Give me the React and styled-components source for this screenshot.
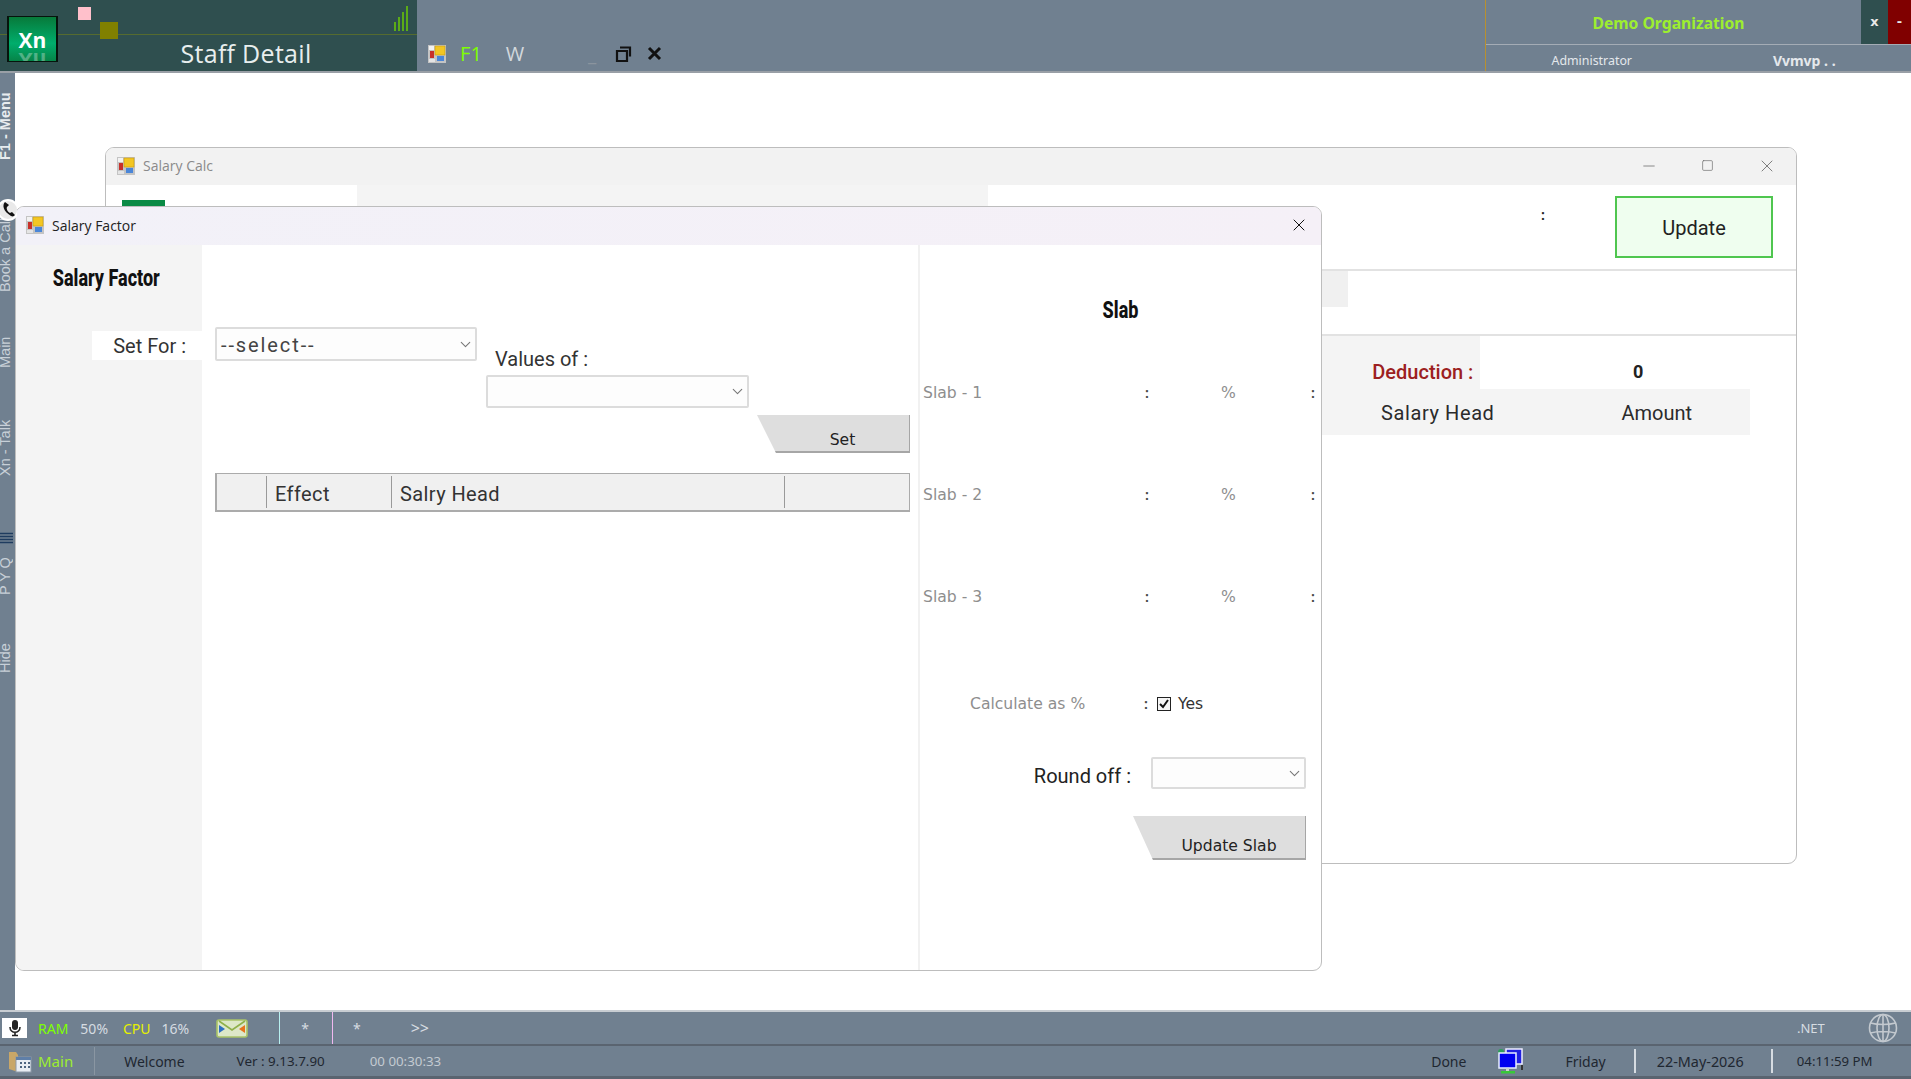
import React from "react";
import styled, { createGlobalStyle } from "styled-components";
import { ChevronDown, X, Minus, Square } from "lucide-react";

const Global = createGlobalStyle`
  html, body { margin: 0; padding: 0; height: 100%; overflow: hidden; background: #fff; }
  #root { height: 100%; }
  * { box-sizing: border-box; }
`;

const Page = styled.div`
  width: 1911px;
  height: 1079px;
  display: flex;
  flex-direction: column;
  overflow: hidden;
  font-family: "Roboto", sans-serif;
  background: #708090;
`;

/* top bar */
const TopBar = styled.div`
  height: 73px;
  flex: none;
  display: flex;
  background: #708090;
  border-bottom: 2px solid #999fa6;
`;
const Brand = styled.div`
  position: relative;
  width: 417px;
  display: flex;
  flex-direction: column;
  background: #2f4f4f;
`;
const BrandTop = styled.div`
  height: 35px;
  border-bottom: 1px solid #556b2f;
`;
const BrandTitle = styled.div`
  flex: 1;
  display: flex;
  align-items: center;
  justify-content: center;
  padding-left: 75px;
  color: #e8eeee;
  font: 400 25px "Open Sans", sans-serif;
  letter-spacing: 0.3px;
`;
const Logo = styled.div`
  position: absolute;
  left: 7px;
  top: 16px;
  width: 51px;
  height: 46px;
  overflow: hidden;
  border: 1px solid #06140c;
  border-width: 1px 2px;
  background: linear-gradient(180deg, #077a3a 0%, #00ad6c 60%, #068448 100%);
  color: #fff;
  font: 700 21px "Open Sans", sans-serif;
  text-align: center;
  line-height: 46px;
`;
const LogoEcho = styled.div`
  position: absolute;
  left: 0;
  right: 0;
  top: 21px;
  transform: scaleY(-1);
  opacity: 0.3;
`;
const Marker = styled.div`
  position: absolute;
  left: ${(p) => p.$x}px;
  top: ${(p) => p.$y}px;
  width: ${(p) => p.$w}px;
  height: ${(p) => p.$h}px;
  background: ${(p) => p.$c};
`;
const Signal = styled.svg`
  position: absolute;
  left: 393px;
  top: 5px;
`;
const TopTools = styled.div`
  flex: 1;
  display: flex;
  align-items: center;
  padding: 36px 0 0 11px;
`;
const ToolText = styled.span`
  width: ${(p) => p.$w}px;
  margin-left: ${(p) => p.$ml || 0}px;
  color: ${(p) => p.$c};
  font: ${(p) => p.$weight || 400} 20px "Open Sans", sans-serif;
  text-align: center;
`;
const RestoreIcon = styled.svg`
  margin-left: 16px;
`;
const CloseIcon = styled.svg`
  margin-left: 15px;
`;
const OrgBlock = styled.div`
  width: 426px;
  display: flex;
  flex-direction: column;
  border-left: 1px solid #b8902f;
`;
const OrgTop = styled.div`
  height: 45px;
  display: flex;
  border-bottom: 1px solid #a4acb5;
`;
const OrgName = styled.div`
  flex: 1;
  text-align: center;
  padding: 12px 10px 0 0;
  color: #9dee2f;
  font: 700 15.7px "Noto Sans", sans-serif;
`;
const OrgButton = styled.div`
  width: ${(p) => p.$w}px;
  background: ${(p) => p.$c};
  color: #e8e8e8;
  text-align: center;
  font: 700 13px "DejaVu Sans", sans-serif;
  padding-top: 14px;
`;
const OrgBottom = styled.div`
  flex: 1;
  display: flex;
  align-items: center;
  padding-top: 4px;
  color: #e4e8ec;
  font: 400 12.4px "Noto Sans", sans-serif;
`;
const OrgCell = styled.div`
  width: ${(p) => p.$w}px;
  text-align: center;
  font-weight: ${(p) => (p.$bold ? 700 : 400)};
  font-size: ${(p) => (p.$bold ? "14px" : "inherit")};
`;

/* middle */
const Middle = styled.div`
  flex: 1;
  display: flex;
  min-height: 0;
`;
const Side = styled.div`
  position: relative;
  z-index: 3;
  width: 15px;
  flex: none;
  display: flex;
  flex-direction: column;
  background: #708090;
  padding-top: 19px;
`;
const SideTab = styled.div`
  height: ${(p) => p.$h}px;
  margin-top: ${(p) => p.$mt}px;
  width: 9px;
  display: flex;
  align-items: center;
  justify-content: center;
  white-space: nowrap;
  writing-mode: vertical-rl;
  transform: rotate(180deg);
  color: ${(p) => (p.$strong ? "#e8ecef" : "#c8d0d8")};
  font: ${(p) => (p.$strong ? 700 : 400)} 14.5px "Liberation Sans", sans-serif;
`;
const PhoneBadge = styled.svg`
  position: absolute;
  left: -1px;
  top: 124px;
`;
const PyqBars = styled.svg`
  position: absolute;
  left: 0;
  top: 459px;
`;
const Desktop = styled.div`
  position: relative;
  flex: 1;
  background: #fff;
`;
const Win = styled.div`
  position: absolute;
  left: ${(p) => p.$x}px;
  top: ${(p) => p.$y}px;
  width: ${(p) => p.$w}px;
  height: ${(p) => p.$h}px;
  display: flex;
  flex-direction: column;
  background: #fff;
  border: 1px solid #bdbdbd;
  border-radius: 9px;
  overflow: hidden;
`;
const TitleBar = styled.div`
  height: ${(p) => p.$h}px;
  flex: none;
  display: flex;
  align-items: center;
  background: ${(p) => p.$bg};
  padding: 0 0 2px ${(p) => p.$pl}px;
  color: ${(p) => p.$c};
  font: 400 14px "Open Sans", sans-serif;
`;
const WinName = styled.span`
  margin-left: 8px;
  flex: 1;
`;
const WinCtl = styled.div`
  width: ${(p) => p.$w || 58}px;
  margin-right: ${(p) => p.$mr || 0}px;
  display: flex;
  justify-content: center;
  color: ${(p) => p.$c};
`;

/* salary calc window */
const CalcHead = styled.div`
  height: 86px;
  flex: none;
  display: flex;
  border-bottom: 2px solid #e2e2e2;
`;
const CalcBrand = styled.div`
  width: 251px;
  padding: 15px 0 0 16px;
`;
const GreenTab = styled.div`
  width: 43px;
  height: 40px;
  background: #0a8a45;
`;
const CalcStrip = styled.div`
  width: 631px;
  background: #f4f4f4;
`;
const CalcActions = styled.div`
  flex: 1;
  display: flex;
  justify-content: flex-end;
  padding: 11px 23px 0 0;
`;
const CalcColon = styled.div`
  margin: 11px 70px 0 0;
  font: 700 14px "Roboto", sans-serif;
  color: #222;
`;
const UpdateButton = styled.div`
  width: 158px;
  height: 62px;
  display: flex;
  align-items: center;
  justify-content: center;
  padding-top: 2px;
  background: #effeef;
  border: 2px solid #4fc64f;
  color: #222;
  font: 400 20px "Roboto", sans-serif;
`;
const CalcMid = styled.div`
  height: 65px;
  flex: none;
  border-bottom: 2px solid #e2e2e2;
`;
const MidStrip = styled.div`
  width: 1242px;
  height: 36px;
  background: #f0f0f0;
`;
const DeductRow = styled.div`
  height: 53px;
  display: flex;
  align-items: stretch;
`;
const DeductLabel = styled.div`
  width: 1376px;
  padding: 24px 7px 0 0;
  text-align: right;
  background: #f4f4f4;
  color: #9c2020;
  font: 500 20px "Roboto", sans-serif;
`;
const DeductValue = styled.div`
  width: 316px;
  padding-top: 25px;
  text-align: center;
  font: 700 18px "Roboto", sans-serif;
  color: #222;
`;
const HeadRow = styled.div`
  width: 1644px;
  height: 46px;
  padding-top: 2px;
  display: flex;
  align-items: center;
  background: #f4f4f4;
  color: #2b2b2b;
  font: 400 20px "Roboto", sans-serif;
`;
const HeadCell = styled.div`
  margin-left: ${(p) => p.$ml}px;
  letter-spacing: ${(p) => p.$ls}px;
`;

/* salary factor window */
const FactorBody = styled.div`
  flex: 1;
  display: flex;
  min-height: 0;
`;
const FactorLeft = styled.div`
  width: 186px;
  background: #f4f4f4;
  padding-top: 19px;
`;
const FormHeading = styled.div`
  font: 800 24px "Roboto", sans-serif;
  line-height: 28px;
  color: #111;
  white-space: nowrap;
  transform: scaleX(0.75);
  transform-origin: ${(p) => p.$origin};
  text-align: ${(p) => p.$align};
  padding-left: ${(p) => p.$pl || 0}px;
`;
const SetFor = styled.div`
  margin: 39px 0 0 76px;
  height: 29px;
  display: flex;
  align-items: center;
  justify-content: flex-end;
  padding-right: 16px;
  background: #fff;
  color: #333;
  font: 400 20px "Roboto", sans-serif;
`;
const FactorMid = styled.div`
  width: 718px;
  padding: 82px 8px 0 13px;
  border-right: 2px solid #f1f1f1;
`;
const MidFields = styled.div`
  display: flex;
  align-items: flex-start;
  gap: 9px;
`;
const ValuesCol = styled.div`
  margin-top: 18px;
`;
const FieldLabel = styled.div`
  height: 30px;
  padding: 2px 0 0 9px;
  color: #333;
  font: 400 20px "Roboto", sans-serif;
`;
const SelectBox = styled.div`
  width: ${(p) => p.$w}px;
  height: ${(p) => p.$h}px;
  display: flex;
  align-items: center;
  padding: 2px 1px 0 4px;
  background: #fdfdfd;
  border: 2px solid #dcdcdc;
  border-radius: 2px;
  color: #444;
  font: 400 20px "Roboto", sans-serif;
  letter-spacing: 1.9px;
  svg { color: #777; margin: -2px 0 0 auto; }
`;
const SetRow = styled.div`
  display: flex;
  justify-content: flex-end;
  margin-top: 7px;
`;
const SlantButton = styled.div`
  width: ${(p) => p.$w}px;
  height: ${(p) => p.$h}px;
  display: flex;
  align-items: flex-end;
  justify-content: center;
  padding: 0 0 ${(p) => p.$pb}px ${(p) => p.$pl}px;
  background: #dedede;
  border-right: 1px solid #a6a6a6;
  border-bottom: 2px solid #a6a6a6;
  clip-path: polygon(0 0, 100% 0, 100% 100%, ${(p) => p.$cut}px 100%);
  color: #222;
  font: 400 15.6px "DejaVu Sans", sans-serif;
`;
const GridHead = styled.div`
  display: grid;
  grid-template-columns: 49px 125px 393px 1fr;
  height: 39px;
  margin-top: 20px;
  background: #f0f0f0;
  border: 2px solid #ababab;
  border-top-width: 1px;
  border-right-width: 1px;
  color: #333;
  font: 400 20px "Roboto", sans-serif;
`;
const GridCell = styled.div`
  display: flex;
  align-items: center;
  padding: 4px 0 0 8px;
  margin: 2px 0;
  border-left: ${(p) => (p.$first ? "none" : "1px solid #9a9a9a")};
  letter-spacing: 0.4px;
`;
const FactorRight = styled.div`
  flex: 1;
  min-width: 0;
  padding-top: 51px;
`;
const HeadingGap = styled.div`
  height: 18px;
`;
const SlabRow = styled.div`
  display: grid;
  grid-template-columns: 222px 76px 90px 1fr;
  height: 102px;
  align-items: center;
  padding-left: 3px;
  color: #8e8e8e;
  font: 400 15.6px "DejaVu Sans", sans-serif;
`;
const Colon = styled.span`
  color: #444;
  font: 700 14px "Roboto", sans-serif;
`;
const CalcAsRow = styled.div`
  display: flex;
  align-items: center;
  height: 24px;
  margin-top: 44px;
  padding-left: 50px;
  color: #8e8e8e;
  font: 400 15.6px "DejaVu Sans", sans-serif;
`;
const CalcAsLabel = styled.div`
  width: 174px;
`;
const Check = styled.div`
  width: 14px;
  height: 14px;
  margin: 0 7px 0 9px;
  display: flex;
  align-items: center;
  justify-content: center;
  border: 1.5px solid #222;
  background: #f5f5f5;
`;
const Yes = styled.span`
  color: #333;
  font: 400 15.6px "DejaVu Sans", sans-serif;
`;
const RoundRow = styled.div`
  display: flex;
  align-items: center;
  justify-content: flex-end;
  gap: 20px;
  margin-top: 41px;
  padding-right: 15px;
  color: #222;
  font: 400 20px "Roboto", sans-serif;
`;
const RoundLabel = styled.span`
  padding-top: 5px;
`;
const UpdateRow = styled.div`
  display: flex;
  justify-content: flex-end;
  margin-top: 27px;
  padding-right: 15px;
`;

/* status bars */
const StatusTop = styled.div`
  height: 36px;
  flex: none;
  display: flex;
  align-items: center;
  background: #708090;
  border-top: 2px solid #c8cdd2;
  border-bottom: 2px solid #5a6470;
  color: #d6dce2;
  font: 400 14px "Noto Sans", sans-serif;
`;
const StatusBottom = styled.div`
  height: 33px;
  flex: none;
  display: flex;
  align-items: center;
  background: #708090;
  border-bottom: 3px solid #5a6470;
  color: #1f2730;
  font: 400 14px "Noto Sans", sans-serif;
`;
const Cell = styled.span`
  margin-left: ${(p) => p.$ml}px;
  color: ${(p) => p.$c || "inherit"};
  font-size: ${(p) => p.$fs || "inherit"};
  white-space: nowrap;
`;
const IconCell = styled.div`
  margin-left: ${(p) => p.$ml}px;
  display: flex;
`;
const MicBox = styled.div`
  width: 25px;
  height: 20px;
  margin-left: 2px;
  display: flex;
  align-items: center;
  justify-content: center;
  background: #fff;
`;
const Rule = styled.div`
  width: ${(p) => p.$w || 1}px;
  height: ${(p) => p.$h}px;
  margin-left: ${(p) => p.$ml}px;
  background: ${(p) => p.$c};
`;

const AppIcon = () => (
  <svg width="18" height="18" viewBox="0 0 18 18">
    <rect width="18" height="18" fill="#c4c4c4" />
    <rect x="1" y="1" width="5" height="4" fill="#f2f2f2" />
    <rect x="2" y="6" width="4" height="7" fill="#c8302a" />
    <rect x="7" y="1" width="10" height="9" fill="#f3c623" stroke="#c99a10" strokeWidth="0.6" />
    <rect x="9" y="11" width="7" height="5" fill="#4a86d8" />
    <rect x="1" y="14" width="6" height="3" fill="#e4e4e4" />
  </svg>
);

const Mic = () => (
  <svg width="14" height="18" viewBox="0 0 14 18">
    <rect x="4" y="1" width="6" height="10" rx="3" fill="#222" />
    <path d="M2 8c0 7 10 7 10 0M7 13v3M4 16.5h6" fill="none" stroke="#222" strokeWidth="1.6" />
  </svg>
);

const Mail = () => (
  <svg width="32" height="19" viewBox="0 0 32 19">
    <rect x="1" y="1" width="30" height="17" rx="2" fill="#dde8c8" stroke="#a9c468" strokeWidth="1.6" />
    <path d="M3 2l13 9 13-9" fill="none" stroke="#8fb04a" strokeWidth="1.6" />
    <path d="M3 6l6 4-6 4z" fill="#2d6fc4" />
    <path d="M29 6l-6 4 6 4z" fill="#e8731c" />
  </svg>
);

const FolderIcon = () => (
  <svg width="25" height="25" viewBox="0 0 25 25">
    <path d="M1 3h7l2 3v17l-9-3z" fill="#c9a768" />
    <rect x="8" y="8" width="15" height="15" fill="#e8edf3" stroke="#8d99a8" />
    <rect x="8" y="8" width="15" height="3" fill="#5f7fa8" />
    <path d="M12 13h2v2h-2zM16 13h2v2h-2zM20 13h2v2h-2zM12 17h2v2h-2zM16 17h2v2h-2zM20 17h2v2h-2z" fill="#4d6480" />
  </svg>
);

const NetIcon = () => (
  <svg width="28" height="26" viewBox="0 0 28 26">
    <circle cx="5" cy="4" r="3" fill="#2e9e5a" />
    <rect x="10" y="1" width="16" height="15" fill="#2020e0" stroke="#eef" strokeWidth="1.5" />
    <rect x="3" y="5" width="17" height="15" fill="#0000f0" stroke="#e8f0ff" strokeWidth="1.5" />
    <rect x="10" y="20" width="3" height="3" fill="#cfd6cf" />
    <rect x="5" y="23" width="14" height="2.5" fill="#38c838" />
    <rect x="25" y="17" width="2" height="5" fill="#333" />
  </svg>
);

const Globe = () => (
  <svg width="30" height="30" viewBox="0 0 30 30" fill="none" stroke="#c3c9cf" strokeWidth="1.6">
    <circle cx="15" cy="15" r="13.5" />
    <ellipse cx="15" cy="15" rx="6" ry="13.5" />
    <path d="M15 1.5v27M2.5 10c7 2 18 2 25 0M2.5 20c7-2 18-2 25 0" />
  </svg>
);

const Phone = () => (
  <>
    <circle cx="9" cy="13" r="10" fill="#e9e9e9" stroke="#fff" strokeWidth="2" />
    <path d="M6 5c-3 3-2 9 6 14 2 1 3 0 4-1l-3-3-2 1c-2-1-4-4-3-6l2-2z" fill="#111" />
  </>
);

export default function App() {
  return (
    <Page>
      <Global />
      <TopBar>
        <Brand>
          <BrandTop />
          <BrandTitle>Staff Detail</BrandTitle>
          <Logo>
            Xn
            <LogoEcho>Xn</LogoEcho>
          </Logo>
          <Marker $x={78} $y={7} $w={13} $h={13} $c="#ffc0cb" />
          <Marker $x={100} $y={22} $w={18} $h={17} $c="#808000" />
          <Signal width="16" height="28" viewBox="0 0 16 28">
            <path d="M2 26V17M6 26V12M10 26V7M14 26V1" stroke="#6fd300" strokeWidth="1.4" />
          </Signal>
        </Brand>
        <TopTools>
          <AppIcon />
          <ToolText $w={22} $ml={14} $c="#7fff00">F1</ToolText>
          <ToolText $w={20} $ml={23} $c="#d3d8dd">W</ToolText>
          <ToolText $w={14} $ml={60} $c="#8a949e" $weight={700}>_</ToolText>
          <RestoreIcon width="17" height="16" viewBox="0 0 17 16">
            <path d="M5 1.5h10v9M2 5h10v10H2z" fill="none" stroke="#111" strokeWidth="2.2" />
          </RestoreIcon>
          <CloseIcon width="15" height="15" viewBox="0 0 15 15">
            <path d="M2 2l11 11M13 2L2 13" stroke="#111" strokeWidth="3" />
          </CloseIcon>
        </TopTools>
        <OrgBlock>
          <OrgTop>
            <OrgName>Demo Organization</OrgName>
            <OrgButton $w={27} $c="#2f4f4f">x</OrgButton>
            <OrgButton $w={23} $c="#800000">-</OrgButton>
          </OrgTop>
          <OrgBottom>
            <OrgCell $w={212}>Administrator</OrgCell>
            <OrgCell $w={214} $bold>Vvmvp . .</OrgCell>
          </OrgBottom>
        </OrgBlock>
      </TopBar>

      <Middle>
        <Side>
          <SideTab $h={68} $mt={0} $strong>F1 - Menu</SideTab>
          <SideTab $h={77} $mt={56}>Book a Call</SideTab>
          <SideTab $h={28} $mt={45}>Main</SideTab>
          <SideTab $h={52} $mt={56}>Xn - Talk</SideTab>
          <SideTab $h={50} $mt={77}>P Y Q</SideTab>
          <SideTab $h={37} $mt={39}>Hide</SideTab>
          <PhoneBadge width="18" height="28" viewBox="0 0 18 28"><Phone /></PhoneBadge>
          <PyqBars width="13" height="14" viewBox="0 0 13 14">
            <path d="M0 1.5h13M0 4.5h13M0 7.5h13M0 10.5h13" stroke="#1f3c5f" strokeWidth="1.6" />
          </PyqBars>
        </Side>
        <Desktop>
          <Win $x={90} $y={74} $w={1692} $h={717}>
            <TitleBar $h={37} $bg="#f2f2f2" $pl={11} $c="#8a8a8a">
              <AppIcon />
              <WinName>Salary Calc</WinName>
              <WinCtl $c="#666"><Minus size={18} strokeWidth={1} /></WinCtl>
              <WinCtl $c="#666" $mr={2}><Square size={13} strokeWidth={1.2} /></WinCtl>
              <WinCtl $c="#666"><X size={20} strokeWidth={1} /></WinCtl>
            </TitleBar>
            <CalcHead>
              <CalcBrand><GreenTab /></CalcBrand>
              <CalcStrip />
              <CalcActions>
                <CalcColon>:</CalcColon>
                <UpdateButton>Update</UpdateButton>
              </CalcActions>
            </CalcHead>
            <CalcMid><MidStrip /></CalcMid>
            <DeductRow>
              <DeductLabel>Deduction :</DeductLabel>
              <DeductValue>0</DeductValue>
            </DeductRow>
            <HeadRow>
              <HeadCell $ml={1275} $ls={0.6}>Salary Head</HeadCell>
              <HeadCell $ml={127} $ls={0}>Amount</HeadCell>
            </HeadRow>
          </Win>

          <Win $x={0} $y={133} $w={1307} $h={765}>
            <TitleBar $h={38} $bg="linear-gradient(90deg, #f2f1f8, #f5f0f7)" $pl={10} $c="#222">
              <AppIcon />
              <WinName>Salary Factor</WinName>
              <WinCtl $c="#111" $w={44}><X size={20} strokeWidth={1.2} /></WinCtl>
            </TitleBar>
            <FactorBody>
              <FactorLeft>
                <FormHeading $origin="left" $align="left" $pl={49}>Salary Factor</FormHeading>
                <SetFor>Set For :</SetFor>
              </FactorLeft>
              <FactorMid>
                <MidFields>
                  <SelectBox $w={262} $h={34}>--select--<ChevronDown size={17} strokeWidth={1.5} /></SelectBox>
                  <ValuesCol>
                    <FieldLabel>Values of :</FieldLabel>
                    <SelectBox $w={263} $h={33}><ChevronDown size={17} strokeWidth={1.5} /></SelectBox>
                  </ValuesCol>
                </MidFields>
                <SetRow>
                  <SlantButton $w={153} $h={38} $cut={19} $pl={19} $pb={2}>Set</SlantButton>
                </SetRow>
                <GridHead>
                  <GridCell $first />
                  <GridCell>Effect</GridCell>
                  <GridCell>Salry Head</GridCell>
                  <GridCell />
                </GridHead>
              </FactorMid>
              <FactorRight>
                <FormHeading $origin="center" $align="center">Slab</FormHeading>
                <HeadingGap />
                {["Slab - 1", "Slab - 2", "Slab - 3"].map((s) => (
                  <SlabRow key={s}>
                    <span>{s}</span>
                    <Colon>:</Colon>
                    <span>%</span>
                    <Colon>:</Colon>
                  </SlabRow>
                ))}
                <CalcAsRow>
                  <CalcAsLabel>Calculate as %</CalcAsLabel>
                  <Colon>:</Colon>
                  <Check>
                    <svg width="10" height="10" viewBox="0 0 10 10">
                      <path d="M1 5l3 3 5-7" fill="none" stroke="#111" strokeWidth="2" />
                    </svg>
                  </Check>
                  <Yes>Yes</Yes>
                </CalcAsRow>
                <RoundRow>
                  <RoundLabel>Round off :</RoundLabel>
                  <SelectBox $w={155} $h={32}><ChevronDown size={17} strokeWidth={1.5} /></SelectBox>
                </RoundRow>
                <UpdateRow>
                  <SlantButton $w={173} $h={44} $cut={20} $pl={20} $pb={3}>Update Slab</SlantButton>
                </UpdateRow>
              </FactorRight>
            </FactorBody>
          </Win>
        </Desktop>
      </Middle>

      <StatusTop>
        <MicBox><Mic /></MicBox>
        <Cell $ml={11} $c="#7fff00">RAM</Cell>
        <Cell $ml={12}>50%</Cell>
        <Cell $ml={15} $c="#e6f000">CPU</Cell>
        <Cell $ml={11}>16%</Cell>
        <IconCell $ml={27}><Mail /></IconCell>
        <Rule $ml={31} $h={32} $c="#b8f0f0" />
        <Cell $ml={21}>*</Cell>
        <Rule $ml={23} $h={32} $c="#f0b8f0" />
        <Cell $ml={20}>*</Cell>
        <Cell $ml={50} $fs="16px">&gt;&gt;</Cell>
        <Cell $ml={1368} $fs="13px">.NET</Cell>
        <IconCell $ml={43}><Globe /></IconCell>
      </StatusTop>
      <StatusBottom>
        <IconCell $ml={8}><FolderIcon /></IconCell>
        <Cell $ml={5} $c="#9dee2f" $fs="15px">Main</Cell>
        <Rule $ml={21} $h={28} $c="#8a96a2" />
        <Cell $ml={29}>Welcome</Cell>
        <Cell $ml={52} $fs="13.4px">Ver : 9.13.7.90</Cell>
        <Cell $ml={45} $c="#c3cad1" $fs="13.3px">00 00:30:33</Cell>
        <Cell $ml={990}>Done</Cell>
        <IconCell $ml={30}><NetIcon /></IconCell>
        <Cell $ml={41}>Friday</Cell>
        <Rule $ml={28} $w={2} $h={24} $c="#d6dce2" />
        <Cell $ml={21} $fs="14.4px">22-May-2026</Cell>
        <Rule $ml={27} $w={2} $h={24} $c="#d6dce2" />
        <Cell $ml={24} $fs="13.2px">04:11:59 PM</Cell>
      </StatusBottom>
    </Page>
  );
}
